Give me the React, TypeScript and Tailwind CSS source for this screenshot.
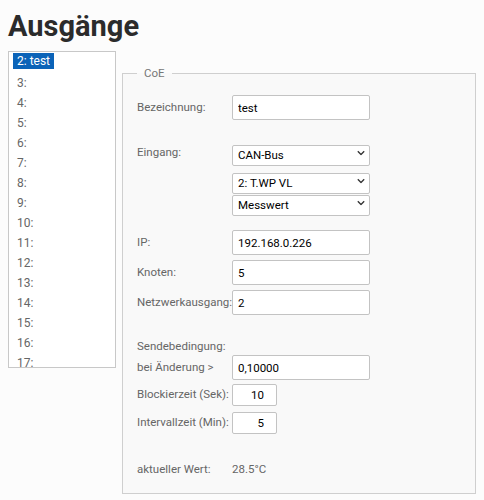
import React from "react";

const items = ["2: test", "3:", "4:", "5:", "6:", "7:", "8:", "9:", "10:", "11:", "12:", "13:", "14:", "15:", "16:", "17:"];

function Chevron() {
  return (
    <svg
      className="pointer-events-none absolute right-[5px] top-1/2 -translate-y-1/2"
      width="8"
      height="5"
      viewBox="0 0 8 5"
      fill="none"
    >
      <path d="M0.8 0.8 L4 4 L7.2 0.8" stroke="#333" strokeWidth="1.3" />
    </svg>
  );
}

function Select({ value, className = "" }: { value: string; className?: string }) {
  return (
    <div className={`relative w-[138px] h-[21px] ${className}`}>
      <select
        defaultValue={value}
        className="h-full w-full appearance-none rounded-[2px] border border-[#c3c3c3] bg-white pl-[5px] text-[11.5px] text-black outline-none"
      >
        <option>{value}</option>
      </select>
      <Chevron />
    </div>
  );
}

function Row({ label, children, className = "" }: { label: string; children: React.ReactNode; className?: string }) {
  return (
    <div className={`flex items-center ${className}`}>
      <span className="w-[95px] shrink-0 whitespace-nowrap text-[11.5px] text-[#666]">{label}</span>
      {children}
    </div>
  );
}

function TextInput({ value, small = false }: { value: string; small?: boolean }) {
  return (
    <input
      defaultValue={value}
      className={
        small
          ? "h-[22px] w-[45px] rounded-[2px] border border-[#c3c3c3] bg-white pr-[12px] text-right text-[11.5px] text-black outline-none"
          : "h-[25px] w-[138px] rounded-[2px] border border-[#c3c3c3] bg-white pl-[5px] text-[11.5px] text-black outline-none"
      }
    />
  );
}

export default function App() {
  return (
    <div className="min-h-[500px] bg-[#fcfcfc] px-2 pt-[8px] font-['Roboto',sans-serif]">
      <h1 className="text-[29px] font-bold leading-[36px] text-[#2b2b2b]">Ausgänge</h1>

      <div className="mt-[7px] flex items-start gap-[6px]">
        {/* LIST */}
        <div className="h-[317px] w-[108px] shrink-0 overflow-hidden border border-[#c8c8c8] bg-white px-[4px] pt-[1px]">
          {items.map((it, i) => (
            <div key={it} className="h-5 text-[12px] leading-4">
              {i === 0 ? (
                <span className="inline-block bg-[#0b63b8] px-[4px] text-white">{it}</span>
              ) : (
                <span className="mt-[2px] inline-block px-[4px] text-[#666]">{it}</span>
              )}
            </div>
          ))}
        </div>

        {/* COE FIELDSET */}
        <fieldset className="mt-[14px] w-[356px] border border-[#cfcfcf] bg-[#f9f9f9] px-[14px] pb-[16px]">
          <legend className="px-[7px] text-[11.5px] leading-4 text-[#777]">CoE</legend>

          <Row label="Bezeichnung:" className="mt-[14px]">
            <TextInput value="test" />
          </Row>

          <div className="mt-[22px] flex items-start">
            <span className="w-[95px] shrink-0 text-[11.5px] leading-[21px] text-[#666]">Eingang:</span>
            <div className="flex flex-col">
              <Select value="CAN-Bus" />
              <Select value="2: T.WP VL" className="mt-[7px]" />
              <Select value="Messwert" className="mt-[1px]" />
            </div>
          </div>

          <Row label="IP:" className="mt-[17px]">
            <TextInput value="192.168.0.226" />
          </Row>
          <Row label="Knoten:" className="mt-[5px]">
            <TextInput value="5" />
          </Row>
          <Row label="Netzwerkausgang:" className="mt-[5px]">
            <TextInput value="2" />
          </Row>

          <div className="mt-[23px] text-[11.5px] leading-4 text-[#666]">Sendebedingung:</div>
          <Row label="bei Änderung >" className="mt-[1px]">
            <TextInput value="0,10000" />
          </Row>
          <Row label="Blockierzeit (Sek):" className="mt-[4px]">
            <TextInput value="10" small />
          </Row>
          <Row label="Intervallzeit (Min):" className="mt-[6px]">
            <TextInput value="5" small />
          </Row>

          <Row label="aktueller Wert:" className="mt-[27px] leading-4">
            <span className="text-[11.5px] text-[#666]">28.5°C</span>
          </Row>
        </fieldset>
      </div>
    </div>
  );
}
